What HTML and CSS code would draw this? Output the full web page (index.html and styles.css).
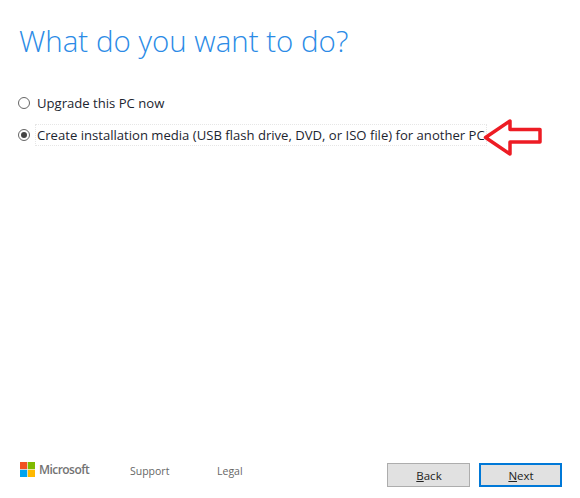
FILE: index.html
```html
<!DOCTYPE html>
<html lang="en">
<head>
<meta charset="utf-8">
<title>What do you want to do?</title>
<link rel="stylesheet" href="styles.css">
</head>
<body>
<main class="page">
  <h1 class="title">What do you want to do?</h1>
  <div class="options">
    <label class="option"><span class="radio"></span><span class="label">Upgrade this PC now</span></label>
    <div class="option-row">
      <label class="option selected"><span class="radio"><span class="dot"></span></span><span class="label focused">Create installation media (USB flash drive, DVD, or ISO file) for another PC</span></label>
      <svg class="arrow" width="64" height="44" viewBox="0 0 64 44"><path d="M5.500 22.500 L30 6 V14.500 H60 V27 H30 V39 Z" fill="#fff" stroke="#ed1c24" stroke-width="3.500" stroke-linejoin="round"/></svg>
    </div>
  </div>
  <footer class="footer">
    <div class="links">
      <div class="brand">
        <svg class="logo" width="15" height="15" viewBox="0 0 15 15"><rect width="7.200" height="7.200" fill="#f25022"/><rect x="7.800" width="7.200" height="7.200" fill="#7fba00"/><rect y="7.800" width="7.200" height="7.200" fill="#00a4ef"/><rect x="7.800" y="7.800" width="7.200" height="7.200" fill="#ffb900"/></svg>
        <span class="brand-name">Microsoft</span>
      </div>
      <a class="link support">Support</a>
      <a class="link">Legal</a>
    </div>
    <div class="buttons">
      <button class="btn"><u>B</u>ack</button>
      <button class="btn primary"><u>N</u>ext</button>
    </div>
  </footer>
</main>
</body>
</html>
```
FILE: styles.css
```css
html, body { margin: 0; padding: 0; background: #fff; }
.page {
  width: 580px; height: 498px; box-sizing: border-box;
  display: flex; flex-direction: column;
  font-family: "Open Sans", "Noto Sans", sans-serif;
  overflow: hidden; position: relative;
}
.title {
  margin: 0; padding: 20px 0 0 19px;
  font-size: 29.500px; line-height: 42px; font-weight: 300; color: #2b8be6;
}
.options { margin-top: 30px; padding-left: 18px; display: flex; flex-direction: column; gap: 10px; }
.option { display: flex; align-items: center; gap: 7px; height: 22px; font-size: 13.100px; color: #1c2530; white-space: nowrap; }
.option-row { position: relative; }
.radio {
  width: 10px; height: 10px; border: 1px solid #666; border-radius: 50%;
  display: flex; align-items: center; justify-content: center; flex: none; background: #fff;
}
.dot { width: 6px; height: 6px; border-radius: 50%; background: #444; }
.label.focused { outline: 1px dotted #e6e6e6; outline-offset: 1px; }
.arrow { position: absolute; left: 462px; top: -9px; }
.footer { margin-top: auto; height: 35px; padding: 0 18px 1px 20px; display: flex; justify-content: space-between; align-items: flex-start; }
.links { display: flex; align-items: center; height: 15px; font-size: 10.500px; color: #666; }
.brand { display: flex; align-items: center; gap: 4px; width: 110px; }
.logo { flex: none; }
.brand-name { font-size: 12px; font-weight: 600; color: #737373; letter-spacing: -0.55px; }
.link { color: #666; position: relative; top: 1px; }
.support { width: 87px; }
.buttons { display: flex; gap: 9px; margin-top: 1px; }
.btn {
  width: 83px; height: 24px; box-sizing: border-box; padding: 0 0 0 1px;
  font: 11.500px "Open Sans", sans-serif; color: #222;
  background: #e1e1e1; border: 1px solid #adadad;
}
.btn.primary { border: 2px solid #0078d7; }
```
